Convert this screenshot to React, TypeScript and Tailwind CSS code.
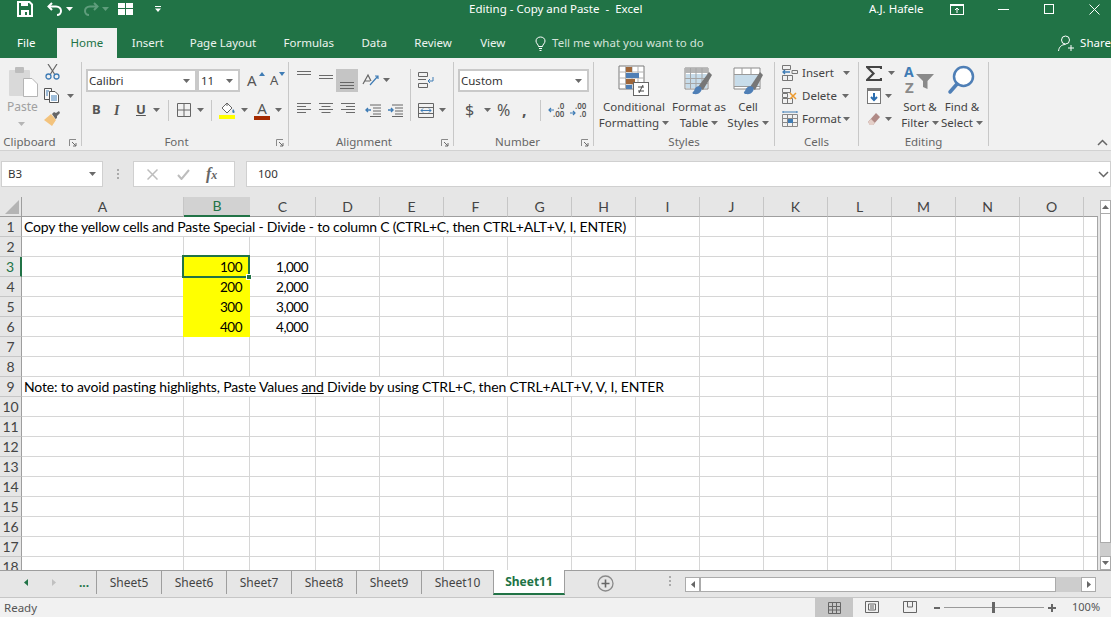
import React from "react";

const Dd = ({ className = "", color = "#6a6a6a" }: { className?: string; color?: string }) => (
  <svg width="7" height="4" viewBox="0 0 7 4" className={"shrink-0 " + className}>
    <path d="M0 0H7L3.5 4Z" fill={color} />
  </svg>
);

const Launcher = () => (
  <svg width="8" height="8" viewBox="0 0 8 8" className="absolute right-[4px] bottom-[-1px]">
    <path d="M0.5 7V0.5H7" stroke="#8a8a8a" fill="none" />
    <path d="M3 3L7 7M7 4V7H4" stroke="#6a6a6a" fill="none" />
  </svg>
);

const Group = ({ w, label, labelClass = "", launcher, children }: { w: string; label: string; labelClass?: string; launcher?: boolean; children: React.ReactNode }) => (
  <div className={"relative flex h-[84px] shrink-0 flex-col border-r border-[#c8c8c8] " + w}>
    <div className="flex-1 min-h-0">{children}</div>
    <div className={"h-[12px] text-center text-[11.5px] leading-[16px] text-[#666] " + labelClass}>{label}</div>
    {launcher && <Launcher />}
  </div>
);

const Lines = ({ widths, y = 0, aligned = "left" }: { widths: number[]; y?: number; aligned?: string }) => (
  <svg width="16" height="16" viewBox="0 0 16 16" className="shrink-0">
    {widths.map((w, i) => {
      const x = aligned === "left" ? 1 : aligned === "right" ? 15 - w : 8 - w / 2;
      return <rect key={i} x={x} y={y + i * 3} width={w} height="1" fill="#6b6b6b" />;
    })}
  </svg>
);

const BigTable = ({ children }: { children?: React.ReactNode }) => (
  <svg width="32" height="32" viewBox="0 0 32 32" className="block">{children}</svg>
);

const cols = ["A", "B", "C", "D", "E", "F", "G", "H", "I", "J", "K", "L", "M", "N", "O", ""];
const sheets = ["Sheet5", "Sheet6", "Sheet7", "Sheet8", "Sheet9"];

const Blank = ({ n }: { n: number }) => <>{Array.from({ length: n }, (_, i) => <div key={i} className="border-r border-b border-[#d6d6d6] bg-white" />)}</>;

const RowHead = ({ n, active }: { n: number; active?: boolean }) => (
  <div className={"flex items-center justify-center border-b border-[#c6c6c6] bg-[#e6e6e6] pt-[1px] text-[14px] leading-none " + (active ? "border-r-2 border-r-[#217346] text-[#217346]" : "border-r border-r-[#9e9e9e] text-[#444]")}>{n}</div>
);

const Num = ({ v, y, children }: { v: string; y?: boolean; children?: React.ReactNode }) => (
  <div className={"relative flex items-center justify-end border-b pt-[2px] pr-[7px] text-[13.5px] leading-none tracking-[-0.5px] text-black " + (y ? "-ml-[1px] border-r border-[#ffff00] bg-[#ffff00]" : "border-r border-[#d6d6d6] bg-white")}>
    {v}
    {children}
  </div>
);

export default function App() {
  const rows: React.ReactNode[] = [];
  for (let r = 1; r <= 18; r++) {
    if (r === 1) {
      rows.push(<RowHead key="h1" n={1} />);
      rows.push(
        <div key="a1" className="col-span-8 flex items-center border-r border-b border-[#d6d6d6] bg-white pt-[1px] pl-[2px] text-[14px] leading-none tracking-[-0.19px] whitespace-nowrap text-black">
          Copy the yellow cells and Paste Special - Divide - to column C (CTRL+C, then CTRL+ALT+V, I, ENTER)
        </div>
      );
      rows.push(<React.Fragment key="b1"><Blank n={8} /></React.Fragment>);
    } else if (r === 9) {
      rows.push(<RowHead key="h9" n={9} />);
      rows.push(
        <div key="a9" className="col-span-9 flex items-center border-r border-b border-[#d6d6d6] bg-white pt-[1px] pl-[2px] text-[14px] leading-none tracking-[-0.15px] whitespace-nowrap text-black">
          <span>Note: to avoid pasting highlights, Paste Values&nbsp;<span className="underline">and</span>&nbsp;Divide by using CTRL+C, then CTRL+ALT+V, V, I, ENTER</span>
        </div>
      );
      rows.push(<React.Fragment key="b9"><Blank n={7} /></React.Fragment>);
    } else if (r >= 3 && r <= 6) {
      const v = String((r - 2) * 100);
      const c = ((r - 2) * 1000).toLocaleString("en-US");
      rows.push(
        <React.Fragment key={"r" + r}>
          <RowHead n={r} active={r === 3} />
          <Blank n={1} />
          <Num v={v} y>
            {r === 3 && (
              <>
                <div className="absolute -top-[2px] -right-[1px] -bottom-[2px] -left-[1px] z-10 border-2 border-[#217346]" />
                <div className="absolute -right-[3px] -bottom-[4px] z-10 h-[6px] w-[6px] border border-white bg-[#217346]" />
              </>
            )}
          </Num>
          <Num v={c} />
          <Blank n={13} />
        </React.Fragment>
      );
    } else {
      rows.push(
        <React.Fragment key={"r" + r}>
          <RowHead n={r} />
          <Blank n={16} />
        </React.Fragment>
      );
    }
  }

  return (
    <div className="flex h-[617px] w-[1111px] flex-col overflow-hidden bg-[#e6e6e6] font-['Noto_Sans',sans-serif] text-[11.5px] select-none">
      {/* Title bar */}
      <div className="flex h-[28px] shrink-0 items-center bg-[#217346] pb-[10px] text-white">
        <svg width="16" height="16" viewBox="0 0 16 16" className="ml-[17px] shrink-0">
          <path d="M1 1H12.5L15 3.5V15H1Z" fill="none" stroke="#fff" strokeWidth="2" />
          <rect x="4" y="1" width="7" height="4" fill="#fff" />
          <rect x="4" y="9" width="8" height="6" fill="#fff" />
          <rect x="8" y="11" width="2" height="3" fill="#217346" />
        </svg>
        <svg width="16" height="14" viewBox="0 0 16 14" className="ml-[14px] shrink-0">
          <path d="M5 1L1.5 4.5L5 8" fill="none" stroke="#fff" strokeWidth="2" />
          <path d="M2 4.5H9C12 4.5 14 6.5 14 9C14 11 12.5 13 10 13" fill="none" stroke="#fff" strokeWidth="2" />
        </svg>
        <Dd className="ml-[3px]" color="#fff" />
        <svg width="16" height="14" viewBox="0 0 16 14" className="ml-[10px] shrink-0">
          <path d="M11 1L14.5 4.5L11 8" fill="none" stroke="#5f9d7c" strokeWidth="2" />
          <path d="M14 4.5H7C4 4.5 2 6.5 2 9C2 11 3.5 13 6 13" fill="none" stroke="#5f9d7c" strokeWidth="2" />
        </svg>
        <Dd className="ml-[3px]" color="#5f9d7c" />
        <svg width="16" height="12" viewBox="0 0 16 12" className="ml-[9px] shrink-0">
          <path d="M0 0H7V5H0ZM8 0H15V5H8ZM0 6H7V12H0ZM8 6H15V12H8Z" fill="#fff" />
        </svg>
        <svg width="7" height="6" viewBox="0 0 7 6" className="ml-[21px] shrink-0">
          <rect x="0" y="0" width="6" height="1" fill="#fff" />
          <path d="M0 2.5H6L3 6Z" fill="#fff" />
        </svg>
        <div className="ml-[307px] w-[400px] text-[11.5px] leading-none whitespace-pre">Editing - Copy and Paste  -  Excel</div>
        <div className="w-[81px] text-[11.5px] leading-none">A.J. Hafele</div>
        <svg width="14" height="11" viewBox="0 0 14 11" className="shrink-0">
          <rect x="0.5" y="0.5" width="13" height="10" fill="none" stroke="#fff" />
          <rect x="0" y="0" width="14" height="2" fill="#fff" />
          <path d="M7 9V4M5 6L7 4L9 6" fill="none" stroke="#fff" />
        </svg>
        <div className="ml-[34px] h-[1px] w-[11px] bg-white" />
        <div className="ml-[35px] h-[10px] w-[10px] border border-white" />
        <svg width="11" height="11" viewBox="0 0 11 11" className="ml-[35px] shrink-0">
          <path d="M0.5 0.5L10.5 10.5M10.5 0.5L0.5 10.5" stroke="#fff" />
        </svg>
      </div>

      {/* Tabs */}
      <div className="flex h-[30px] shrink-0 items-stretch bg-[#217346] text-[11.5px] text-white">
        <div className="ml-[17px] flex w-[40px] items-center">File</div>
        <div className="flex w-[60px] items-center justify-center bg-[#f1f1f1] text-[#217346]">Home</div>
        <div className="ml-[15px] flex w-[58px] items-center text-[#edf3ef]">Insert</div>
        <div className="flex w-[94px] items-center text-[#edf3ef]">Page Layout</div>
        <div className="flex w-[78px] items-center text-[#edf3ef]">Formulas</div>
        <div className="flex w-[53px] items-center text-[#edf3ef]">Data</div>
        <div className="flex w-[66px] items-center text-[#edf3ef]">Review</div>
        <div className="flex w-[55px] items-center text-[#edf3ef]">View</div>
        <div className="flex w-[524px] items-center text-[#d3e3d9]">
          <svg width="11" height="15" viewBox="0 0 11 15" className="mr-[6px] shrink-0">
            <path d="M3.5 10.5C3.5 8.5 1 7.500 1 5C1 2.500 3 1 5.500 1C8 1 10 2.500 10 5C10 7.500 7.500 8.500 7.500 10.500Z" fill="none" stroke="#fff" />
            <path d="M4 12.500H7M4.500 14.500H6.500" stroke="#fff" />
          </svg>
          Tell me what you want to do
        </div>
        <div className="flex items-center whitespace-nowrap">
          <svg width="17" height="17" viewBox="0 0 17 17" className="mr-[5px] shrink-0">
            <circle cx="7.500" cy="5" r="4" fill="none" stroke="#fff" />
            <path d="M0.500 16C1 12 3.500 9.500 7.500 9.500M13 10V16M10 13H16" fill="none" stroke="#fff" />
          </svg>
          Share
        </div>
      </div>

      {/* Ribbon */}
      <div className="relative flex h-[93px] shrink-0 items-center border-b border-[#d2d2d2] bg-[#f1f1f1] text-[11.5px] text-[#444]">
        <Group w="w-[82px]" label="Clipboard" labelClass="pr-[22px]" launcher>
          <div className="flex">
            <div className="ml-[7px] flex w-[37px] flex-col items-start">
              <svg width="30" height="31" viewBox="0 0 30 31" className="mt-[4px] ml-[2px]">
                <rect x="0" y="4" width="21" height="26" rx="1" fill="#d9d9d9" />
                <rect x="6" y="1" width="9" height="6" rx="1" fill="#bdbdbd" />
                <path d="M14.500 12.500H23L28.500 18V30.500H14.500Z" fill="#fff" stroke="#b5b5b5" />
              </svg>
              <div className="mt-[3px] text-[12px] leading-[14px] text-[#a0a0a0]">Paste</div>
              <Dd className="mt-[8px] ml-[11px]" color="#b5b5b5" />
            </div>
            <div className="flex flex-col pt-[2px]">
              <svg width="15" height="16" viewBox="0 0 15 16" className="ml-[1px]">
                <path d="M3 0L9.500 10M12 0L5.500 10" stroke="#666" strokeWidth="1.200" />
                <circle cx="3.500" cy="12.500" r="2.500" fill="none" stroke="#3f7cb5" strokeWidth="1.300" />
                <circle cx="11.500" cy="12.500" r="2.500" fill="none" stroke="#3f7cb5" strokeWidth="1.300" />
              </svg>
              <div className="mt-[8px] flex items-center">
                <svg width="16" height="15" viewBox="0 0 16 15">
                  <path d="M0.500 0.500H7.500V11.500H0.500Z" fill="#f6f6f6" stroke="#555" />
                  <path d="M5.500 3.500H11L14.500 7V14.500H5.500Z" fill="#fff" stroke="#555" />
                  <path d="M7 8H13M7 10H13M7 12H13M2 3H5M2 5H4M2 7H4" stroke="#3f7cb5" />
                </svg>
                <Dd className="ml-[7px]" />
              </div>
              <svg width="17" height="15" viewBox="0 0 17 15" className="mt-[8px]">
                <path d="M0 9L7 3L12 9L8 15Z" fill="#f3c37d" />
                <path d="M8 3L10 1L12 2L15 0L16 2L13 5L13 7L11.500 8Z" fill="#666" />
              </svg>
            </div>
          </div>
        </Group>

        <Group w="w-[207px]" label="Font" labelClass="pr-[17px]" launcher>
          <div className="flex h-[22px] items-center pl-[4px] mt-[7px]">
            <div className="flex h-[23px] w-[111px] items-center justify-between border-2 border-[#c9c9c9] bg-white pt-[1px] pr-[5px] pl-[1px] text-[11.5px] text-[#333]">
              Calibri
              <Dd />
            </div>
            <div className="flex h-[23px] w-[43px] items-center justify-between border-2 border-[#c9c9c9] bg-white pt-[1px] pr-[5px] pl-[2px] text-[11.5px] text-[#333]">
              11
              <Dd />
            </div>
            <div className="relative ml-[7px] w-[14px] text-[15px] leading-none text-[#555]">
              A
              <svg width="6" height="4" viewBox="0 0 6 4" className="absolute -top-[1px] right-[-4px]"><path d="M0 4H6L3 0Z" fill="#3f7cb5" /></svg>
            </div>
            <div className="relative ml-[9px] w-[12px] text-[13px] leading-none text-[#555]">
              A
              <svg width="6" height="4" viewBox="0 0 6 4" className="absolute -top-[2px] right-[-3px]"><path d="M0 0H6L3 4Z" fill="#3f7cb5" /></svg>
            </div>
          </div>
          <div className="mt-[9px] flex h-[20px] items-center">
            <div className="ml-[10px] w-[22px] text-[13px] font-bold text-[#555]">B</div>
            <div className="w-[22px] font-['Liberation_Serif',serif] text-[14px] font-bold text-[#555] italic">I</div>
            <div className="w-[17px] text-[13px] font-bold text-[#555] underline">U</div>
            <Dd />
            <div className="ml-[8px] h-[21px] w-px bg-[#c8c8c8]" />
            <svg width="14" height="14" viewBox="0 0 14 14" className="ml-[8px] shrink-0">
              <path d="M0.500 0.500H13.500V13.500H0.500ZM7 0V14M0 7H14" fill="none" stroke="#666" />
            </svg>
            <Dd className="ml-[6px]" />
            <div className="ml-[7px] h-[21px] w-px bg-[#c8c8c8]" />
            <div className="ml-[7px] flex w-[17px] flex-col">
              <svg width="17" height="13" viewBox="0 0 17 13">
                <path d="M3 6L8 1L13 6L8 11Z" fill="#fff" stroke="#666" />
                <path d="M8 1V4" stroke="#666" />
                <path d="M14 7C13 9 13 11 14.500 11C16 11 16 9 14 7Z" fill="#3f7cb5" />
              </svg>
              <div className="h-[4px] w-[16px] bg-[#ffff00]" />
            </div>
            <Dd className="ml-[5px]" />
            <div className="ml-[6px] flex w-[16px] flex-col items-center">
              <div className="h-[14px] text-[15px] leading-[14px] text-[#555]">A</div>
              <div className="mt-[1px] h-[4px] w-[16px] bg-[#a52a00]" />
            </div>
            <Dd className="ml-[5px]" />
          </div>
        </Group>

        <Group w="w-[165px]" label="Alignment" labelClass="pr-[14px]" launcher>
          <div className="relative mt-[7px] flex h-[22px] items-center pl-[7px]">
            <div className="w-[22px] self-start pt-[2px]"><Lines widths={[14, 14, 0]} /></div>
            <div className="w-[18px] self-start pt-[6px]"><Lines widths={[14, 14, 0]} /></div>
            <div className="flex h-[23px] w-[22px] items-end justify-center bg-[#c5c5c5] pb-[2px]">
              <svg width="14" height="8" viewBox="0 0 14 8"><path d="M0 0.500H14M0 3.500H14M0 6.500H14" stroke="#666" /></svg>
            </div>
            <svg width="18" height="16" viewBox="0 0 18 16" className="ml-[4px] shrink-0">
              <path d="M1 12L6 3L9 9M2.500 9H8" fill="none" stroke="#666" strokeWidth="1.200" />
              <path d="M8 13L16 4M13 4H16V7" fill="none" stroke="#3f7cb5" strokeWidth="1.200" />
            </svg>
            <Dd className="ml-[3px]" />
            <div className="ml-[20px] h-[22px] w-px bg-[#c8c8c8]" />
            <svg width="16" height="16" viewBox="0 0 16 16" className="ml-[7px] shrink-0 -mt-[1px]">
              <path d="M0.500 0.500H9.500V4.500H0.500ZM0.500 11.500H9.500V15.500H0.500Z" fill="none" stroke="#666" />
              <path d="M0 7.500H8" stroke="#666" />
              <path d="M15 5V9H10M12 7L10 9L12 11" fill="none" stroke="#3f7cb5" />
            </svg>
          </div>
          <div className="mt-[9px] flex h-[20px] items-center pl-[7px]">
            <div className="w-[22px] pt-[2px]"><Lines widths={[14, 9, 14, 9]} /></div>
            <div className="w-[22px] pt-[2px]"><Lines widths={[14, 9, 14, 9]} aligned="center" /></div>
            <div className="w-[25px] pt-[2px]"><Lines widths={[14, 9, 14, 9]} aligned="right" /></div>
            <svg width="16" height="13" viewBox="0 0 16 13" className="shrink-0">
              <path d="M5 1H16M8 4H16M8 7H16M8 10H16M5 12.500H16" stroke="#666" />
              <path d="M6 6H1M3 4L1 6L3 8" fill="none" stroke="#3f7cb5" strokeWidth="1.400" />
            </svg>
            <svg width="16" height="13" viewBox="0 0 16 13" className="ml-[6px] shrink-0">
              <path d="M5 1H16M8 4H16M8 7H16M8 10H16M5 12.500H16" stroke="#666" />
              <path d="M1 6H6M4 4L6 6L4 8" fill="none" stroke="#3f7cb5" strokeWidth="1.400" />
            </svg>
            <div className="-mt-[9px] ml-[7px] h-[30px] w-px bg-[#c8c8c8]" />
            <svg width="16" height="15" viewBox="0 0 16 15" className="ml-[7px] shrink-0">
              <path d="M0.500 0.500H15.500V14.500H0.500ZM0 4.500H16M0 10.500H16" fill="none" stroke="#666" />
              <path d="M3 7.500H13M5 5.500L3 7.500L5 9.500M11 5.500L13 7.500L11 9.500" fill="none" stroke="#3f7cb5" />
            </svg>
            <Dd className="ml-[5px]" />
          </div>
        </Group>

        <Group w="w-[140px]" label="Number" labelClass="pr-[12px]" launcher>
          <div className="mt-[7px] flex h-[22px] items-center pl-[4px]">
            <div className="flex h-[23px] w-[131px] items-center justify-between border-2 border-[#c9c9c9] bg-white pt-[1px] pr-[5px] pl-[1px] text-[11.5px] text-[#333]">
              Custom
              <Dd />
            </div>
          </div>
          <div className="mt-[9px] flex h-[20px] items-center">
            <div className="ml-[11px] w-[17px] text-[16px] leading-none text-[#555]">$</div>
            <Dd className="ml-[2px]" />
            <div className="ml-[6px] w-[25px] text-[16px] leading-none text-[#555]">%</div>
            <div className="w-[18px] text-[16px] leading-none font-bold text-[#555]">,</div>
            <div className="h-[21px] w-px bg-[#c8c8c8]" />
            <div className="ml-[7px] flex w-[22px] items-center">
              <svg width="6" height="6" viewBox="0 0 6 6" className="shrink-0"><path d="M6 3H1M3 1L1 3L3 5" fill="none" stroke="#3f7cb5" strokeWidth="1.200" /></svg>
              <div className="ml-[-1px] text-right text-[8px] leading-[8px] font-semibold text-[#555]">.0<br />.00</div>
            </div>
            <div className="flex w-[18px] items-center">
              <svg width="6" height="6" viewBox="0 0 6 6" className="mt-[6px] shrink-0"><path d="M0 3H5M3 1L5 3L3 5" fill="none" stroke="#3f7cb5" strokeWidth="1.200" /></svg>
              <div className="ml-[-1px] text-right text-[8px] leading-[8px] font-semibold text-[#555]">.00<br />.0</div>
            </div>
          </div>
        </Group>

        <Group w="w-[181px]" label="Styles">
          <div className="flex pt-[3px] text-center text-[11.5px] leading-[16px] text-[#444]">
            <div className="ml-[7px] flex w-[66px] flex-col items-center">
              <BigTable>
                <path d="M1 1H26V24H1Z" fill="#fff" stroke="#7b7b7b" />
                <path d="M7.500 1V24M14 1V24M20 1V24M1 7H26M1 13H26M1 19H26" stroke="#b0b0b0" />
                <rect x="8" y="2" width="6" height="5" fill="#a0673a" />
                <rect x="8" y="8" width="13" height="5" fill="#4f7fb6" />
                <rect x="8" y="14" width="9" height="5" fill="#a0673a" />
                <rect x="8" y="20" width="6" height="4" fill="#4f7fb6" />
                <rect x="15.500" y="17.500" width="15" height="13" fill="#fff" stroke="#666" />
                <path d="M20 22H26M20 26H26M25 20L21 28" stroke="#444" />
              </BigTable>
              <div className="mt-[2px]">Conditional</div>
              <div className="flex items-center whitespace-nowrap">Formatting<Dd className="ml-[3px]" /></div>
            </div>
            <div className="flex w-[64px] flex-col items-center">
              <BigTable>
                <path d="M2 3H25V24H2Z" fill="#fff" stroke="#8a8a8a" />
                <rect x="2" y="3" width="23" height="5" fill="#b5b5b5" />
                <rect x="3" y="9" width="21" height="14" fill="#c7dcea" />
                <path d="M2 13.500H25M2 18.500H25M7.500 3V24M13 3V24M19 3V24" stroke="#a5a5a5" />
                <path d="M15 22L26 7L29 10L20 25Z" fill="#777" />
                <path d="M11 26C12 22 15 20 18 22C20 25 17 30 11 29C9 29 9 27 11 26Z" fill="#4f7fb6" />
              </BigTable>
              <div className="mt-[2px] whitespace-nowrap">Format as</div>
              <div className="flex items-center whitespace-nowrap">Table<Dd className="ml-[3px]" /></div>
            </div>
            <div className="flex w-[34px] flex-col items-center">
              <BigTable>
                <path d="M2 3H28V24H2Z" fill="#fff" stroke="#8a8a8a" />
                <rect x="3" y="10" width="24" height="11" fill="#c7dcea" />
                <path d="M2 9.500H28M2 21.500H28M10 3V9M19 3V9" stroke="#9a9a9a" />
                <path d="M18 22L28 7L31 10L23 25Z" fill="#777" />
                <path d="M13 26C14 22 18 20 21 22C23 25 20 30 14 29C12 29 11 27 13 26Z" fill="#4f7fb6" />
              </BigTable>
              <div className="mt-[2px]">Cell</div>
              <div className="flex items-center whitespace-nowrap">Styles<Dd className="ml-[3px]" /></div>
            </div>
          </div>
        </Group>

        <Group w="w-[84px]" label="Cells">
          <div className="flex flex-col pt-[3px] pl-[7px] text-[11.5px] leading-[16px] text-[#444]">
            <div className="flex h-[16px] items-center">
              <svg width="16" height="16" viewBox="0 0 16 16" className="mr-[4px] shrink-0">
                <path d="M0.500 0.500H8.500V4.500H0.500ZM0.500 10.500H10.500V15.500H0.500ZM5.500 10.500V15.500M10 5.500H15.500V8.500H10Z" fill="none" stroke="#777" />
                <path d="M8 7H1M3 5L1 7L3 9" fill="none" stroke="#3f7cb5" strokeWidth="1.300" />
              </svg>
              Insert
              <Dd className="ml-[9px]" />
            </div>
            <div className="mt-[7px] flex h-[16px] items-center">
              <svg width="16" height="16" viewBox="0 0 16 16" className="mr-[4px] shrink-0">
                <path d="M0.500 0.500H8.500V4.500H0.500ZM0.500 10.500H10.500V15.500H0.500ZM5.500 10.500V15.500M0.500 5.500H5.500V9.500H0.500Z" fill="none" stroke="#777" />
                <path d="M8 5L14 11M14 5L8 11" stroke="#ed9a2d" strokeWidth="1.500" />
              </svg>
              Delete
              <Dd className="ml-[5px]" />
            </div>
            <div className="mt-[7px] flex h-[16px] items-center">
              <svg width="16" height="16" viewBox="0 0 16 16" className="mr-[4px] shrink-0">
                <path d="M0.500 3.500H15.500V15.500H0.500ZM0 7.500H16M0 11.500H16M5.500 3V16M10.500 3V16" fill="none" stroke="#888" />
                <rect x="6" y="8" width="5" height="4" fill="#3f7cb5" />
                <path d="M1 1H15M1 0V2M15 0V2" stroke="#3f7cb5" />
              </svg>
              Format
              <Dd className="ml-[2px]" />
            </div>
          </div>
        </Group>

        <Group w="w-[130px]" label="Editing">
          <div className="flex text-center text-[11.5px] leading-[16px] text-[#444]">
            <div className="flex w-[45px] flex-col pt-[3px] pl-[7px]">
              <div className="flex h-[16px] items-center">
                <svg width="16" height="15" viewBox="0 0 16 15" className="shrink-0"><path d="M15 3V1H1L7.500 7.500L1 14H15V12" fill="none" stroke="#444" strokeWidth="2.200" /></svg>
                <Dd className="ml-[6px]" />
              </div>
              <div className="mt-[7px] flex h-[16px] items-center">
                <svg width="15" height="16" viewBox="0 0 15 16" className="ml-[1px] shrink-0">
                  <rect x="0.500" y="0.500" width="13" height="15" fill="#fff" stroke="#777" />
                  <rect x="0" y="0" width="14" height="3" fill="#777" />
                  <path d="M7 5V12M4 9L7 12L10 9" fill="none" stroke="#2a6db0" strokeWidth="2" />
                </svg>
                <Dd className="ml-[3px]" />
              </div>
              <div className="mt-[7px] flex h-[16px] items-center">
                <svg width="14" height="14" viewBox="0 0 14 14" className="ml-[1px] shrink-0">
                  <path d="M1 10L9 1L13 5L6 13H3Z" fill="#b08a86" />
                  <path d="M1 10L4 7L8 11L6 13H3Z" fill="#e4cfc8" />
                </svg>
                <Dd className="ml-[4px]" />
              </div>
            </div>
            <div className="flex w-[32px] flex-col items-center pt-[3px]">
              <svg width="32" height="32" viewBox="0 0 32 32" className="block">
                <text x="0" y="12" fontSize="14" fontWeight="700" fill="#3f7cb5" fontFamily="Noto Sans">A</text>
                <text x="1" y="28" fontSize="15" fontWeight="700" fill="#8a8a8a" fontFamily="Noto Sans">Z</text>
                <path d="M12 9H30L23.500 16V24L19 22V16Z" fill="#8a8a8a" />
              </svg>
              <div className="mt-[2px] whitespace-nowrap">Sort &amp;</div>
              <div className="flex items-center whitespace-nowrap">Filter<Dd className="ml-[3px]" /></div>
            </div>
            <div className="ml-[10px] flex w-[32px] flex-col items-center pt-[3px]">
              <svg width="32" height="32" viewBox="0 0 32 32" className="block">
                <circle cx="17.500" cy="11.500" r="9.500" fill="#fff" stroke="#4f7fb6" strokeWidth="2.500" />
                <path d="M11 19L4 27" stroke="#4f7fb6" strokeWidth="3.500" strokeLinecap="round" />
              </svg>
              <div className="mt-[2px] whitespace-nowrap">Find &amp;</div>
              <div className="flex items-center whitespace-nowrap">Select<Dd className="ml-[3px]" /></div>
            </div>
          </div>
        </Group>

        <svg width="11" height="7" viewBox="0 0 11 7" className="absolute right-[3px] bottom-[4px]">
          <path d="M1 6L5.500 1.500L10 6" fill="none" stroke="#666" strokeWidth="1.500" />
        </svg>
      </div>

      {/* Formula bar */}
      <div className="flex h-[46px] shrink-0 items-start bg-[#e6e6e6] pt-[10px]">
        <div className="ml-[1px] flex h-[26px] w-[102px] items-center justify-between border border-[#d0d0d0] bg-white pr-[6px] pl-[6px] text-[11.5px] text-[#333]">
          B3
          <Dd />
        </div>
        <div className="ml-[13px] flex h-[26px] w-[3px] flex-col items-center justify-center gap-[2px]">
          <div className="h-[2px] w-[2px] bg-[#aaa]" />
          <div className="h-[2px] w-[2px] bg-[#aaa]" />
          <div className="h-[2px] w-[2px] bg-[#aaa]" />
        </div>
        <div className="ml-[14px] flex h-[26px] w-[102px] items-center border border-[#d0d0d0] bg-white">
          <svg width="11" height="11" viewBox="0 0 11 11" className="ml-[13px] shrink-0"><path d="M0.500 0.500L10.500 10.500M10.500 0.500L0.500 10.500" stroke="#bdbdbd" strokeWidth="1.500" /></svg>
          <svg width="13" height="11" viewBox="0 0 13 11" className="ml-[19px] shrink-0"><path d="M1 6L4.500 10L12 1" fill="none" stroke="#bdbdbd" strokeWidth="2" /></svg>
          <div className="ml-[16px] font-['Liberation_Serif',serif] text-[16px] leading-none font-bold text-[#666] italic">f<span className="text-[12px]">x</span></div>
        </div>
        <div className="ml-[11px] flex h-[26px] flex-1 items-center justify-between border border-[#d0d0d0] bg-white pr-[1px] pl-[11px] text-[11.5px] text-[#333]">
          100
          <svg width="11" height="7" viewBox="0 0 11 7"><path d="M1 1L5.500 5.500L10 1" fill="none" stroke="#666" strokeWidth="1.500" /></svg>
        </div>
      </div>

      {/* Sheet */}
      <div className="flex h-[373px] shrink-0 overflow-hidden font-['Lato',sans-serif]">
        <div className="relative w-[1098px] shrink-0 overflow-hidden">
          <div className="grid grid-cols-[22px_162px_66px_66px_64px_64px_64px_64px_64px_64px_64px_64px_64px_64px_64px_64px_14px] grid-rows-[20px_repeat(18,20px)]">
            <div className="relative border-r border-b border-[#9e9e9e] bg-[#e6e6e6]">
              <svg width="14" height="14" viewBox="0 0 14 14" className="absolute right-[2px] bottom-[2px]"><path d="M14 0V14H0Z" fill="#b4b4b4" /></svg>
            </div>
            {cols.map((c, i) =>
              c === "B" ? (
                <div key={i} className="flex items-center justify-center border-b-2 border-[#217346] bg-[#d2d2d2] text-[14px] leading-none text-[#217346]">{c}</div>
              ) : c === "" ? (
                <div key={i} className="border-b border-b-[#9e9e9e] bg-[#e6e6e6]" />
              ) : (
                <div key={i} className="flex items-center justify-center border-r border-b border-r-[#c6c6c6] border-b-[#9e9e9e] bg-[#e6e6e6] text-[14px] leading-none text-[#444]">{c}</div>
              )
            )}
            {rows}
          </div>
          <div className="absolute top-[20px] right-0 bottom-0 w-px bg-[#a6a6a6]" />
        </div>
        <div className="flex flex-1 flex-col bg-[#e6e6e6] pl-[2px]">
          <div className="mt-[3px] flex h-[14px] items-center justify-center border border-[#ababab] bg-white">
            <svg width="7" height="4" viewBox="0 0 7 4"><path d="M0 4H7L3.500 0Z" fill="#666" /></svg>
          </div>
          <div className="flex-1 bg-[#cdcdcd]">
            <div className="h-[329px] border-x border-b border-[#ababab] bg-white" />
          </div>
          <div className="flex h-[14px] items-center justify-center border border-[#ababab] bg-white">
            <Dd />
          </div>
        </div>
      </div>

      {/* Sheet tabs */}
      <div className="flex h-[28px] shrink-0 items-start border-y border-t-[#9e9e9e] border-b-[#c6c6c6] bg-[#e6e6e6] text-[12px] text-[#444]">
        <div className="relative flex h-[23px] w-[97px] shrink-0 items-center border-r border-[#9e9e9e]">
          <svg width="4" height="7" viewBox="0 0 4 7" className="ml-[24px] shrink-0"><path d="M4 0V7L0 3.500Z" fill="#217346" /></svg>
          <svg width="4" height="7" viewBox="0 0 4 7" className="ml-[24px] shrink-0"><path d="M0 0V7L4 3.500Z" fill="#c0c0c0" /></svg>
          <div className="ml-[23px] text-[12px] font-bold text-[#217346]">...</div>
        </div>
        {sheets.map((s) => (
          <div key={s} className="flex h-[23px] w-[65px] shrink-0 items-center justify-center border-r border-[#9e9e9e]">{s}</div>
        ))}
        <div className="flex h-[23px] w-[71px] shrink-0 items-center justify-center">Sheet10</div>
        <div className="-mt-[1px] flex h-[25px] w-[72px] shrink-0 items-center justify-center border-x border-b-2 border-x-[#9e9e9e] border-b-[#217346] bg-white font-bold text-[#217346]">Sheet11</div>
        <svg width="17" height="17" viewBox="0 0 17 17" className="mt-[4px] ml-[32px] shrink-0">
          <circle cx="8.500" cy="8.500" r="7.500" fill="none" stroke="#8a8a8a" strokeWidth="1.300" />
          <path d="M4.500 8.500H12.500M8.500 4.500V12.500" stroke="#666" strokeWidth="1.600" />
        </svg>
        <div className="mt-[5px] ml-[55px] flex h-[12px] w-[3px] flex-col gap-[2px]">
          <div className="h-[2px] w-[2px] bg-[#aaa]" />
          <div className="h-[2px] w-[2px] bg-[#aaa]" />
          <div className="h-[2px] w-[2px] bg-[#aaa]" />
        </div>
        <div className="mt-[6px] ml-[13px] flex h-[15px] w-[411px] bg-[#cdcdcd]">
          <div className="flex w-[15px] shrink-0 items-center justify-center border border-[#ababab] bg-white">
            <svg width="4" height="7" viewBox="0 0 4 7"><path d="M4 0V7L0 3.500Z" fill="#666" /></svg>
          </div>
          <div className="w-[356px] border border-[#ababab] bg-white" />
          <div className="flex-1" />
          <div className="flex w-[15px] shrink-0 items-center justify-center border border-[#ababab] bg-white">
            <svg width="4" height="7" viewBox="0 0 4 7"><path d="M0 0V7L4 3.500Z" fill="#666" /></svg>
          </div>
        </div>
      </div>

      {/* Status bar */}
      <div className="flex h-[19px] shrink-0 items-stretch bg-[#f1f1f1] text-[11.5px] text-[#555]">
        <div className="ml-[4px] flex w-[811px] items-center">Ready</div>
        <div className="flex w-[38px] items-center justify-center bg-[#c6c6c6]">
          <svg width="13" height="12" viewBox="0 0 13 12"><path d="M0.500 0.500H12.500V11.500H0.500ZM0 4.500H13M0 8H13M4.500 0V12M8.500 0V12" fill="none" stroke="#666" /></svg>
        </div>
        <svg width="14" height="12" viewBox="0 0 14 12" className="mt-[3px] ml-[12px]"><path d="M0.500 0.500H13.500V11.500H0.500ZM3.500 3H10.500V9H3.500ZM5 5H9M5 7H9" fill="none" stroke="#666" /></svg>
        <svg width="14" height="12" viewBox="0 0 14 12" className="mt-[3px] ml-[24px]"><path d="M0.500 11.500V0.500H13.500V11.500ZM4.500 0V6H9.500V0" fill="none" stroke="#666" /></svg>
        <div className="ml-[17px] flex items-center">
          <div className="h-[2px] w-[6px] bg-[#666]" />
          <div className="relative ml-[4px] h-px w-[100px] bg-[#9a9a9a]">
            <div className="absolute top-[-5px] left-[48px] h-[11px] w-[3px] bg-[#666]" />
          </div>
          <svg width="8" height="8" viewBox="0 0 8 8" className="ml-[4px]"><path d="M0 4H8M4 0V8" stroke="#666" strokeWidth="2" /></svg>
        </div>
        <div className="ml-[16px] flex items-center text-[11px]">100%</div>
      </div>
    </div>
  );
}
